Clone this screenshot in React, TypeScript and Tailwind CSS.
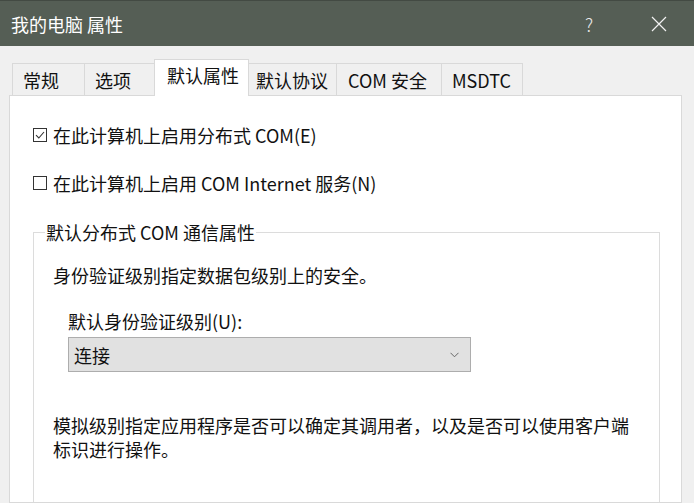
import React from "react";

const tabs = [
  { label: "常规", cls: "w-[72px] pl-[10px] border-l" },
  { label: "选项", cls: "w-[70px] pl-[10px] border-l" },
  { label: "默认属性", cls: "w-[95px] pl-[12px] border-x", active: true },
  { label: "默认协议", cls: "w-[87px] pl-[7px]" },
  { label: "COM 安全", cls: "w-[105px] pl-[11px] border-l" },
  { label: "MSDTC", cls: "w-[82px] pl-[10px] border-x" },
];

const CheckBox = ({ checked }: { checked?: boolean }) => (
  <svg width="14" height="14" viewBox="0 0 14 14" className="shrink-0">
    <rect x="0.5" y="0.5" width="13" height="13" fill="#fff" stroke="#333" />
    {checked && <path d="M3 7.2 L5.8 10 L11 4" fill="none" stroke="#333" strokeWidth="1.1" />}
  </svg>
);

export default function App() {
  return (
    <div className="flex h-[503px] w-[694px] flex-col overflow-hidden bg-[#f0f0f0] font-['Noto_Sans_CJK_SC','Microsoft_YaHei',sans-serif] text-[18px] leading-[24px] text-[#111]">
      {/* 标题栏 */}
      <header className="flex h-[46px] shrink-0 items-center border-t border-[#434a43] bg-[#555e55] pl-[11px] text-white">
        <span className="flex-1">我的电脑 属性</span>
        <span className="mr-[58px] text-[18px] font-light text-[#e8e8e8]">?</span>
        <svg width="16" height="16" viewBox="0 0 16 16" className="mr-[27px]">
          <path d="M1 1 L15 15 M15 1 L1 15" stroke="#f2f2f2" strokeWidth="1.2" />
        </svg>
      </header>

      <div className="flex flex-1 flex-col pl-[9px] pr-[12px] pt-[13px]">
        {/* 选项卡 */}
        <div className="relative z-10 -mb-px flex items-end pl-[3px]">
          {tabs.map((t) =>
            t.active ? (
              <div
                key={t.label}
                className={`${t.cls} h-[37px] border-t border-[#d9d9d9] bg-white pt-[3px]`}
              >
                {t.label}
              </div>
            ) : (
              <div
                key={t.label}
                className={`${t.cls} h-[33px] border-t border-b border-[#d9d9d9] bg-[#f0f0f0] pt-[4px]`}
              >
                {t.label}
              </div>
            )
          )}
        </div>

        {/* 面板 */}
        <div className="flex flex-1 flex-col border border-[#d9d9d9] bg-white pl-[23px] pr-[21px] pt-[27px]">
          <label className="flex items-center gap-[6px]">
            <CheckBox checked />
            <span>在此计算机上启用分布式 COM(E)</span>
          </label>
          <label className="mt-[24px] flex items-center gap-[6px]">
            <CheckBox />
            <span>在此计算机上启用 COM Internet 服务(N)</span>
          </label>

          <fieldset className="mt-[25px] flex-1 border border-b-0 border-[#dcdcdc]">
            <legend className="ml-[11px] px-[1px]">默认分布式 COM 通信属性</legend>
            <div className="pl-[19px]">
              <p className="pt-[19px]">身份验证级别指定数据包级别上的安全。</p>
              <p className="ml-[15px] mt-[22px]">默认身份验证级别(U):</p>
              <div className="ml-[15px] mt-[4px] flex h-[35px] w-[403px] items-center justify-between border border-[#adadad] bg-[#e1e1e1] pl-[5px] pr-[11px]">
                <span>连接</span>
                <svg width="9" height="6" viewBox="0 0 9 6">
                  <path d="M0.5 0.8 L4.5 4.8 L8.5 0.8" fill="none" stroke="#666" strokeWidth="1" />
                </svg>
              </div>
              <p className="mt-[41px] w-[590px]">
                模拟级别指定应用程序是否可以确定其调用者，以及是否可以使用客户端标识进行操作。
              </p>
            </div>
          </fieldset>
        </div>
      </div>
    </div>
  );
}
